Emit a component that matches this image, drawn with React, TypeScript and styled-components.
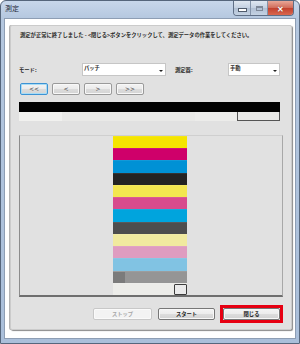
import styled, { createGlobalStyle } from 'styled-components';

const GlobalStyle = createGlobalStyle`
  html, body {
    margin: 0;
    padding: 0;
    background: #ffffff;
  }
  * {
    box-sizing: border-box;
  }
`;

const PATCHES = [
  '#f5e500',
  '#cf006a',
  '#0091d5',
  '#232323',
  '#f3e650',
  '#d84b8d',
  '#00a4dd',
  '#4d4d4d',
  '#f1ea9f',
  '#df9cc0',
  '#81c3e3',
  '#959595',
  '#ecece9',
];

const App = () => {
  return (
    <>
      <GlobalStyle />
      <Window>
        <TitleBar>
          <Title>測定</Title>
          <CaptionGroup>
            <CaptionButton>
              <MinGlyph />
            </CaptionButton>
            <CaptionButton>
              <MaxGlyph />
            </CaptionButton>
            <CloseButton>✕</CloseButton>
          </CaptionGroup>
        </TitleBar>
        <Client>
          <Panel>
            <Message>
              測定が正常に終了しました - &lt;閉じる&gt;ボタンをクリックして、測定データの作業をしてください。
            </Message>
            <FieldRow>
              <Label $width={63}>モード:</Label>
              <Select $width={84}>
                <span>パッチ</span>
                <Arrow />
              </Select>
              <Label $width={53} $gap={9}>
                測定器:
              </Label>
              <Select $width={52}>
                <span>手動</span>
                <Arrow />
              </Select>
            </FieldRow>
            <NavRow>
              <NavButton $focused>&lt;&lt;</NavButton>
              <NavButton>&lt;</NavButton>
              <NavButton>&gt;</NavButton>
              <NavButton>&gt;&gt;</NavButton>
            </NavRow>
            <Scroller>
              <ScrollBlack />
              <ScrollStrip>
                <StripCell $width={43} $color='#f1f1ef' />
                <StripCell $width={133} $color='#e9e9e7' />
                <StripCell $width={42} $color='#ececea' />
                <StripMarker />
              </ScrollStrip>
            </Scroller>
            <Chart>
              <PatchColumn>
                {PATCHES.map((color, key) => (
                  <PatchRow key={key} $color={color}>
                    {key === 11 && <PatchCell $color='#7b7b7b' />}
                    {key === 12 && <SelectedCell />}
                  </PatchRow>
                ))}
              </PatchColumn>
            </Chart>
            <ButtonRow>
              <Button disabled>ストップ</Button>
              <Button>スタート</Button>
              <Highlight>
                <Button>閉じる</Button>
              </Highlight>
            </ButtonRow>
          </Panel>
        </Client>
      </Window>
    </>
  );
};

const Window = styled.div`
  width: 300px;
  height: 344px;
  display: flex;
  flex-direction: column;
  padding: 0 3px 4px;
  background: linear-gradient(#c8d7eb, #b4c7df 18px, #aabfda);
  border: 1px solid #56667c;
  border-radius: 6px 6px 0 0;
  font-family: 'Noto Sans CJK JP', 'Noto Sans', sans-serif;
`;

const TitleBar = styled.div`
  height: 17px;
  display: flex;
  align-items: flex-start;
  justify-content: space-between;
`;

const Title = styled.div`
  margin: 3px 0 0 1px;
  font-size: 7px;
  line-height: 9px;
  color: #1c2838;
`;

const CaptionGroup = styled.div`
  display: flex;
  margin-right: 2px;
  border: 1px solid #5f6f86;
  border-top: none;
  border-radius: 0 0 4px 4px;
  overflow: hidden;
  height: 15px;
`;

const CaptionButton = styled.div`
  width: 17px;
  display: flex;
  align-items: center;
  justify-content: center;
  background: linear-gradient(#dfe7f1, #c3d0e1 50%, #b0bfd3 51%, #c4d2e3);
  border-right: 1px solid #8393a9;
`;

const MinGlyph = styled.div`
  width: 7px;
  height: 2px;
  margin-top: 4px;
  background: #fff;
  border: 1px solid #4f5b6c;
  box-sizing: content-box;
`;

const MaxGlyph = styled.div`
  width: 7px;
  height: 5px;
  border: 1px solid #7d8898;
  border-top-width: 2px;
  background: transparent;
`;

const CloseButton = styled.div`
  width: 25px;
  display: flex;
  align-items: center;
  justify-content: center;
  font-size: 8px;
  font-weight: bold;
  color: #fff;
  text-shadow: 0 0 1px #6a1a10;
  background: linear-gradient(#e9a797, #d06a58 50%, #c2412e 51%, #d9674f);
`;

const Client = styled.div`
  flex: 1;
  display: flex;
  padding: 6px 3px 8px 5px;
  background: #ffffff;
  border: 1px solid #8e9eb4;
`;

const Panel = styled.div`
  flex: 1;
  display: flex;
  flex-direction: column;
  padding: 0 8px;
  background: #e1e1e1;
  border: 1px solid #cbcbcb;
  border-radius: 2px;
  box-shadow: 1px 1px 1px #8a8a8a, -1px 0 0 #b5b5b5;
`;

const Message = styled.div`
  margin-top: 6px;
  padding-left: 1px;
  font-size: 5.3px;
  font-weight: bold;
  line-height: 7px;
  color: #2a2a2a;
  white-space: nowrap;
`;

const FieldRow = styled.div`
  margin-top: 24px;
  height: 13px;
  display: flex;
  align-items: center;
`;

const Label = styled.div<{ $width: number; $gap?: number }>`
  width: ${({ $width }) => $width}px;
  margin-left: ${({ $gap }) => $gap ?? 0}px;
  font-size: 5.3px;
  font-weight: bold;
  color: #2a2a2a;
`;

const Select = styled.div<{ $width: number }>`
  width: ${({ $width }) => $width}px;
  height: 13px;
  display: flex;
  align-items: flex-start;
  justify-content: space-between;
  padding: 1px 2px 0 1px;
  background: #ffffff;
  border: 1px solid #c6c6c6;
  font-size: 5.3px;
  font-weight: bold;
  line-height: 7px;
  color: #2a2a2a;
`;

const Arrow = styled.div`
  align-self: center;
  margin-top: 2px;
  width: 0;
  height: 0;
  border-left: 2px solid transparent;
  border-right: 2px solid transparent;
  border-top: 2px solid #222;
`;

const NavRow = styled.div`
  margin: 7px 0 0 1px;
  display: flex;
  gap: 4px;
`;

const NavButton = styled.div<{ $focused?: boolean }>`
  width: 28px;
  height: 12px;
  display: flex;
  align-items: center;
  justify-content: center;
  border-radius: 2px;
  border: 1px solid ${({ $focused }) => ($focused ? '#3d93d4' : '#9a9a9a')};
  box-shadow: ${({ $focused }) => ($focused ? 'inset 0 0 0 1px #a9dcf5' : 'inset 0 0 0 1px #f8f8f8')};
  background: linear-gradient(#f3f3f3, #ebebeb 50%, #dcdcdc 51%, #d4d4d4);
  font-family: 'DejaVu Sans', sans-serif;
  font-size: 6px;
  line-height: 8px;
  color: #333;
`;

const Scroller = styled.div`
  margin-top: 7px;
  width: 261px;
  display: flex;
  flex-direction: column;
`;

const ScrollBlack = styled.div`
  height: 10px;
  background: #000000;
`;

const ScrollStrip = styled.div`
  height: 9px;
  display: flex;
`;

const StripCell = styled.div<{ $width: number; $color: string }>`
  width: ${({ $width }) => $width}px;
  background: ${({ $color }) => $color};
`;

const StripMarker = styled.div`
  flex: 1;
  background: #e8e8e6;
  border: 1px solid #555;
  border-top: none;
`;

const Chart = styled.div`
  margin-top: 14px;
  width: 264px;
  height: 162px;
  display: flex;
  justify-content: center;
  background: #e1e1e1;
  border-top: 1px solid #cfcfcf;
  border-left: 1px solid #8c8c8c;
  border-right: 1px solid #a8a8a8;
  border-bottom: 2px solid #6e6e6e;
`;

const PatchColumn = styled.div`
  width: 74px;
  margin-right: 2px;
  display: flex;
  flex-direction: column;
`;

const PatchRow = styled.div<{ $color: string }>`
  flex: 1;
  display: flex;
  justify-content: space-between;
  background: ${({ $color }) => $color};
  border-top: 1px solid rgba(255, 255, 255, 0.08);
`;

const PatchCell = styled.div<{ $color: string }>`
  width: 12px;
  background: ${({ $color }) => $color};
`;

const SelectedCell = styled.div`
  width: 13px;
  margin-left: auto;
  background: #eaeaea;
  border: 1px solid #3c3c3c;
  border-radius: 1px;
`;

const ButtonRow = styled.div`
  margin-top: 8px;
  display: flex;
  align-items: center;
  justify-content: flex-end;
  gap: 6px;
`;

const Button = styled.div<{ disabled?: boolean }>`
  width: ${({ disabled }) => (disabled ? 59 : 57)}px;
  height: 12px;
  display: flex;
  align-items: center;
  justify-content: center;
  border-radius: 2px;
  border: 1px solid ${({ disabled }) => (disabled ? '#c8c8c8' : '#777777')};
  background: ${({ disabled }) =>
    disabled ? '#f3f3f3' : 'linear-gradient(#f4f4f4, #ececec 50%, #dddddd 51%, #d2d2d2)'};
  box-shadow: inset 0 0 0 1px ${({ disabled }) => (disabled ? '#fafafa' : '#f8f8f8')};
  font-size: 5.3px;
  font-weight: bold;
  color: ${({ disabled }) => (disabled ? '#a6a6a6' : '#222222')};
`;

const Highlight = styled.div`
  margin-left: -1px;
  border: 3px solid #e60012;
  display: flex;
`;

export default App;
